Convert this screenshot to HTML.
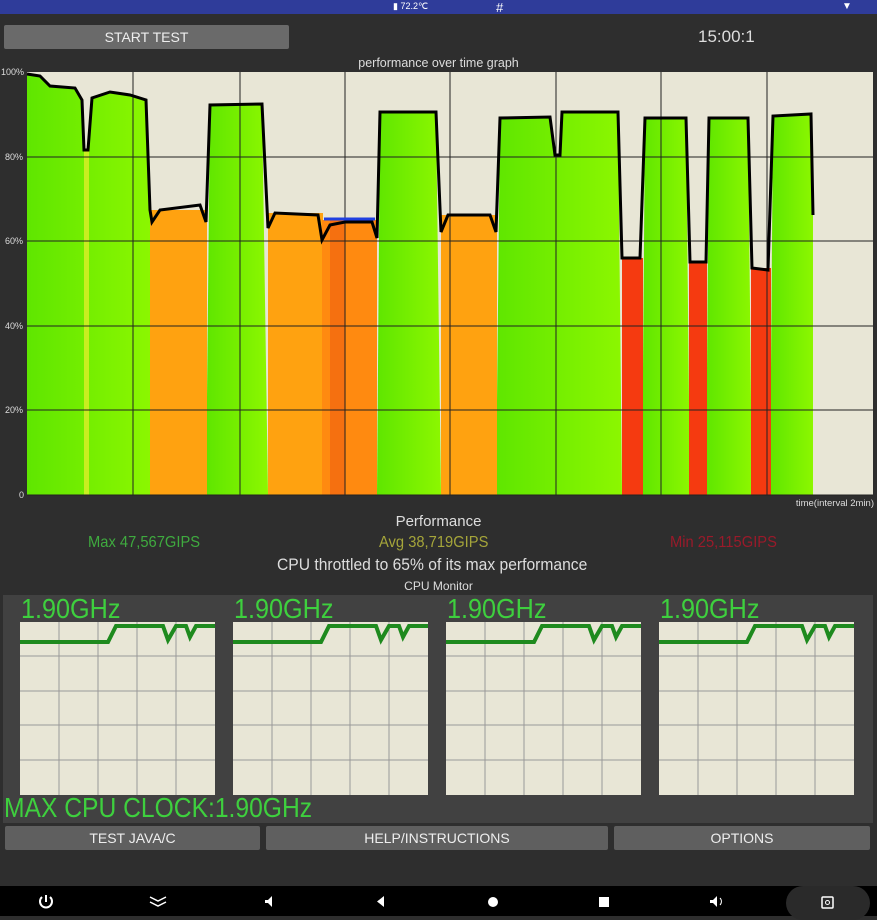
<!DOCTYPE html>
<html><head><style>
body{margin:0;width:877px;height:916px;background:#2e2e2e;font-family:"Liberation Sans",sans-serif;position:relative;overflow:hidden;color:#ddd}
.a{position:absolute}
.btn{position:absolute;background:#5f5f5f;color:#eee;font-size:14px;text-align:center;border-radius:2px;transform-origin:center}
.c{text-align:center}
.g{font-size:28px;color:#3ed03e;transform:scaleX(0.9);transform-origin:left top}
.s{transform:scaleX(0.92);transform-origin:left top;font-size:16px}
</style></head><body>
<div class="a" style="left:0;top:0;width:877px;height:14px;background:#2f3c9a"></div>
<div class="a" style="left:393px;top:1px;font-size:9px;color:#fff">&#9646; 72.2℃</div>
<div class="a" style="left:496px;top:0;font-size:13px;color:#fff">#</div>
<div class="a" style="left:842px;top:1px;font-size:10px;color:#fff">▼</div>
<div class="btn" style="left:4px;top:25px;width:285px;height:24px;line-height:24px;background:#6a6a6a">START TEST</div>
<div class="a" style="left:698px;top:27px;font-size:17px;color:#ddd">15:00:1</div>
<div class="a c" style="left:0;width:877px;top:56px;font-size:12.5px">performance over time graph</div>
<div class="a" style="left:1px;top:67px;font-size:9px">100%</div>
<div class="a" style="left:5px;top:152px;font-size:9px">80%</div>
<div class="a" style="left:5px;top:236px;font-size:9px">60%</div>
<div class="a" style="left:5px;top:321px;font-size:9px">40%</div>
<div class="a" style="left:5px;top:405px;font-size:9px">20%</div>
<div class="a" style="left:19px;top:490px;font-size:9px">0</div>
<svg class="a" style="left:0;top:0" width="877" height="916">
<defs><linearGradient id="gg" x1="0" x2="1"><stop offset="0" stop-color="#5fe600"/><stop offset="1" stop-color="#8cf700"/></linearGradient></defs>
<rect x="27" y="72" width="846" height="423" fill="#e8e6d6"/>
<g fill="url(#gg)">
<polygon points="27,495 27,74 40,76 50,86 75,88 82,100 84,150 88,150 92,98 110,92 130,95 146,100 150,210 152,495"/>
<polygon points="206,495 210,105 262,104 268,495"/>
<polygon points="377,495 380,112 436,112 441,495"/>
<polygon points="496,495 500,118 550,117 555,155 560,155 562,112 618,112 622,495"/>
<polygon points="642,495 645,118 686,118 690,495"/>
<polygon points="706,495 709,118 748,118 752,495"/>
<polygon points="770,495 773,116 811,114 813,210 813,495"/>
</g>
<rect x="84" y="150" width="5" height="345" fill="#c8ee20"/>
<g fill="#ffa210">
<rect x="150" y="210" width="57" height="285"/>
<rect x="268" y="213" width="55" height="282"/>
<rect x="441" y="215" width="56" height="280"/>
</g>
<rect x="322" y="220" width="55" height="275" fill="#ff8a10"/>
<rect x="330" y="220" width="15" height="275" fill="#f57010"/>
<g fill="#f53a10">
<rect x="622" y="258" width="21" height="237"/>
<rect x="689" y="262" width="18" height="233"/>
<rect x="751" y="268" width="20" height="227"/>
</g>
<g stroke="#222" stroke-width="1">
<line x1="133" y1="72" x2="133" y2="495"/><line x1="240" y1="72" x2="240" y2="495"/><line x1="345" y1="72" x2="345" y2="495"/><line x1="450" y1="72" x2="450" y2="495"/><line x1="556" y1="72" x2="556" y2="495"/><line x1="661" y1="72" x2="661" y2="495"/><line x1="767" y1="72" x2="767" y2="495"/>
<line x1="27" y1="157" x2="873" y2="157"/><line x1="27" y1="241" x2="873" y2="241"/><line x1="27" y1="326" x2="873" y2="326"/><line x1="27" y1="410" x2="873" y2="410"/><line x1="27" y1="495" x2="873" y2="495"/>
</g>
<polyline fill="none" stroke="#000" stroke-width="3" points="27,74 40,76 50,86 75,88 82,100 84,150 88,150 92,98 110,92 130,95 146,100 150,210 152,222 160,210 200,205 206,222 210,105 262,104 268,228 275,213 318,215 322,240 330,225 345,222 372,222 377,238 380,112 436,112 441,232 448,215 490,215 496,232 500,118 550,117 555,155 560,155 562,112 618,112 622,258 640,258 645,118 686,118 690,262 706,262 709,118 748,118 752,268 768,270 773,116 811,114 813,215"/>
<line x1="324" y1="219" x2="375" y2="219" stroke="#2040e0" stroke-width="3"/>
</svg>
<div class="a" style="right:3px;top:498px;font-size:9.5px">time(interval 2min)</div>
<div class="a c" style="left:0;width:877px;top:513px;font-size:15px">Performance</div>
<div class="a s" style="left:88px;top:534px;color:#3faa3f">Max 47,567GIPS</div>
<div class="a s" style="left:379px;top:534px;color:#a5a53a">Avg 38,719GIPS</div>
<div class="a s" style="left:670px;top:534px;color:#9a1a2a">Min 25,115GIPS</div>
<div class="a s" style="left:277px;top:555px;font-size:17px">CPU throttled to 65% of its max performance</div>
<div class="a c" style="left:0;width:877px;top:579px;font-size:12px">CPU Monitor</div>
<div class="a" style="left:3px;top:595px;width:870px;height:228px;background:#414141"></div>
<svg class="a" style="left:0;top:0" width="877" height="916">
<g id="ch">
<rect x="20" y="622" width="195" height="173" fill="#e8e6d6"/>
<g stroke="#999" stroke-width="1"><line x1="59" y1="622" x2="59" y2="795"/><line x1="98" y1="622" x2="98" y2="795"/><line x1="137" y1="622" x2="137" y2="795"/><line x1="176" y1="622" x2="176" y2="795"/>
<line x1="20" y1="656" x2="215" y2="656"/><line x1="20" y1="691" x2="215" y2="691"/><line x1="20" y1="725" x2="215" y2="725"/><line x1="20" y1="760" x2="215" y2="760"/></g>
<polyline fill="none" stroke="#1e8a1e" stroke-width="4" points="20,642 108,642 116,626 163,626 168,640 172,633 176,626 186,626 190,637 196,626 215,626"/>
</g>
<use href="#ch" x="213"/><use href="#ch" x="426"/><use href="#ch" x="639"/>
</svg>
<div class="a g" style="left:21px;top:593px">1.90GHz</div>
<div class="a g" style="left:234px;top:593px">1.90GHz</div>
<div class="a g" style="left:447px;top:593px">1.90GHz</div>
<div class="a g" style="left:660px;top:593px">1.90GHz</div>
<div class="a g" style="left:4px;top:792px;transform:scaleX(0.88)">MAX CPU CLOCK:1.90GHz</div>
<div class="btn" style="left:5px;top:826px;width:255px;height:24px;line-height:24px">TEST JAVA/C</div>
<div class="btn" style="left:266px;top:826px;width:342px;height:24px;line-height:24px">HELP/INSTRUCTIONS</div>
<div class="btn" style="left:614px;top:826px;width:256px;height:24px;line-height:24px">OPTIONS</div>
<div class="a" style="left:0;top:886px;width:877px;height:30px;background:#000"></div>
<div class="a" style="left:786px;top:886px;width:84px;height:34px;border-radius:17px;background:#2a2a2a"></div>
<svg class="a" style="left:0;top:886px" width="877" height="30" fill="#fff" stroke="#fff">
<path d="M42 11a6 6 0 1 0 8 0" fill="none" stroke-width="2"/><line x1="46" y1="9" x2="46" y2="16" stroke-width="2"/>
<path d="M150 11l8 4 8-4M150 16l8 4 8-4" fill="none" stroke-width="1.5"/>
<path d="M265 14h3l4-4v11l-4-4h-3z" stroke="none"/>
<path d="M384 10v11l-7-5.5z" stroke="none"/>
<circle cx="493" cy="16" r="5" stroke="none"/>
<rect x="599" y="11" width="10" height="10" stroke="none"/>
<path d="M710 14h3l4-4v11l-4-4h-3z" stroke="none"/><path d="M720 12a5 5 0 0 1 0 7" fill="none"/>
<rect x="822" y="11" width="11" height="11" rx="1" fill="none" stroke-width="1.5"/><circle cx="827.5" cy="16.5" r="2" fill="none"/>
</svg>
</body></html>
